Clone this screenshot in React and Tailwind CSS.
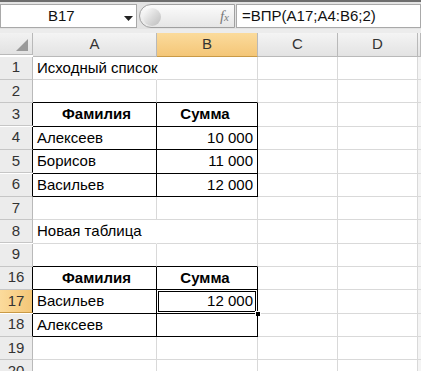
import React from "react";

const rows = [
  { n: 1, a: "Исходный список", overflow: true },
  { n: 2, topOfTable: true },
  { n: 3, a: "Фамилия", b: "Сумма", head: true, table: true },
  { n: 4, a: "Алексеев", b: "10 000", table: true },
  { n: 5, a: "Борисов", b: "11 000", table: true },
  { n: 6, a: "Васильев", b: "12 000", table: true },
  { n: 7 },
  { n: 8, a: "Новая таблица", overflow: true },
  { n: 9, topOfTable: true },
  { n: 16, a: "Фамилия", b: "Сумма", head: true, table: true },
  { n: 17, a: "Васильев", b: "12 000", table: true, active: true },
  { n: 18, a: "Алексеев", b: "", table: true },
  { n: 19 },
  { n: 20 },
];

const font = { fontFamily: '"Liberation Sans", Arial, sans-serif' };

const FormulaBar = () => (
  <div className="bg-[#e3e3e3]">
    <div className="h-[2px] bg-[#6d6d6d]" />
    <div className="flex h-[27px] items-stretch pt-[2px] pb-[1px]">
      {/* name box */}
      <div className="relative flex w-[137px] items-center border border-[#a9a9a9] bg-white">
        <span className="ml-[47px] text-[15px] text-[#111]">B17</span>
        <svg className="absolute left-[123px] top-[11px]" width="9" height="5" viewBox="0 0 9 5">
          <path d="M0 0 H9 L4.5 5 Z" fill="#222" />
        </svg>
      </div>
      {/* fx pill */}
      <div className="relative ml-[2px] flex w-[96px] items-center justify-end rounded-l-full border border-[#a0a0a0] bg-gradient-to-b from-[#fbfbfb] to-[#e6e6e6] pr-[5px]">
        <div className="absolute left-[3px] top-[3px] h-[18px] w-[18px] rounded-full bg-gradient-to-br from-[#ffffff] via-[#dcdcdc] to-[#bdbdbd]" />
        <span className="text-[15px] italic text-[#7a7a7a]" style={{ fontFamily: '"Liberation Serif", serif' }}>
          f<span className="text-[11px]">x</span>
        </span>
      </div>
      {/* formula */}
      <div className="ml-[1px] flex flex-1 items-center border border-[#a9a9a9] bg-white pl-[5px]">
        <span className="text-[15px] text-[#111]">=ВПР(A17;A4:B6;2)</span>
      </div>
    </div>
    <div className="h-[4px] bg-[#ececec]" />
  </div>
);

const colHead = "flex items-center justify-center border-r border-b border-[#b9b9b9] text-[15px] text-[#333]";

const App = () => {
  return (
    <div className="h-[371px] w-[421px] overflow-hidden bg-white" style={font}>
      <FormulaBar />
      <div className="grid grid-cols-[33px_124px_101px_80px_80px_1fr]">
        {/* header row */}
        <div className="relative h-[22px] border-r border-b border-[#b9b9b9] bg-gradient-to-b from-[#f2f2f2] to-[#e2e2e2]">
          <svg className="absolute bottom-[3px] right-[4px]" width="12" height="12" viewBox="0 0 12 12">
            <path d="M12 0 V12 H0 Z" fill="#9a9a9a" />
          </svg>
        </div>
        <div className={`${colHead} bg-gradient-to-b from-[#f4f4f4] to-[#e3e3e3]`}>A</div>
        <div className={`${colHead} bg-gradient-to-b from-[#fbdb9c] to-[#f4c677] border-b-[#c99a46]`}>B</div>
        <div className={`${colHead} bg-gradient-to-b from-[#f4f4f4] to-[#e3e3e3]`}>C</div>
        <div className={`${colHead} bg-gradient-to-b from-[#f4f4f4] to-[#e3e3e3]`}>D</div>
        <div className={`${colHead} bg-gradient-to-b from-[#f4f4f4] to-[#e3e3e3]`} />

        {rows.map((r) => {
          const tableBottom = r.table || r.topOfTable;
          return (
            <React.Fragment key={r.n}>
              <div
                className={`flex h-[23px] items-center justify-center border-b text-[15px] text-[#333] ${
                  r.active
                    ? "bg-gradient-to-r from-[#fbdb9c] to-[#f4c677] border-b-[#c99a46]"
                    : "bg-[#ececec] border-b-[#c6c6c6]"
                } border-r ${r.table ? "border-r-black" : "border-r-[#b9b9b9]"}`}
              >
                {r.n}
              </div>
              <div
                className={`flex items-center whitespace-nowrap border-b border-r pl-[4px] text-[15px] text-black ${
                  tableBottom ? "border-b-black" : "border-b-[#d9d9d9]"
                } ${r.table ? "border-r-black" : r.overflow ? "border-r-transparent" : "border-r-[#d9d9d9]"} ${
                  r.head ? "justify-center pl-0 font-bold" : ""
                }`}
              >
                {r.a}
              </div>
              <div
                className={`relative flex items-center border-b border-r pr-[4px] text-[15px] text-black ${
                  tableBottom ? "border-b-black" : "border-b-[#d9d9d9]"
                } ${r.table ? "border-r-black" : "border-r-[#d9d9d9]"} ${
                  r.head ? "justify-center pr-0 font-bold" : "justify-end"
                }`}
              >
                {r.b}
                {r.active && (
                  <>
                    <div className="absolute inset-[-1px] border border-black" />
                    <div className="absolute inset-[1px] border border-black" />
                    <div className="absolute bottom-[-4px] right-[-4px] h-[6px] w-[6px] border border-white bg-black" />
                  </>
                )}
              </div>
              <div className="border-r border-b border-[#d9d9d9]" />
              <div className="border-r border-b border-[#d9d9d9]" />
              <div className="border-b border-[#d9d9d9] bg-[#f4f4f4]" />
            </React.Fragment>
          );
        })}
      </div>
    </div>
  );
};

export default App;
